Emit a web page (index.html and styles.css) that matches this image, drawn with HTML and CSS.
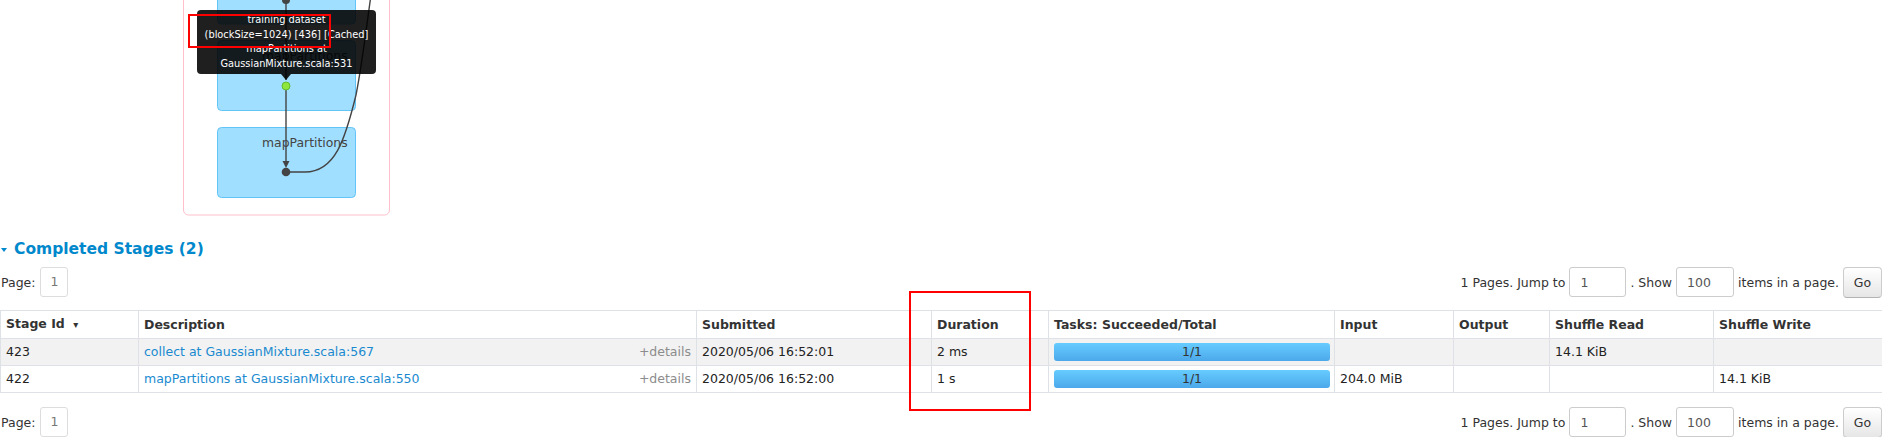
FILE: index.html
```html
<!DOCTYPE html>
<html lang="en">
<head>
  <meta charset="UTF-8">
  <meta name="viewport" content="width=device-width, initial-scale=1.0">
  <title>Stage Details</title>
  <link rel="stylesheet" href="styles.css">
</head>
<body>
<div class="page">
  <!-- DAG visualization -->
  <div class="dag">
    <svg class="dag-svg" width="420" height="216" viewBox="0 0 420 216">
      <rect x="183.5" y="-10" width="206" height="225" rx="5" fill="#fff" stroke="#ffc0cb"/>
      <rect class="dag-node" x="217.5" y="-60" width="138" height="84" rx="4"/>
      <rect class="dag-node" x="217.5" y="40.5" width="138" height="70" rx="4"/>
      <rect class="dag-node" x="217.5" y="127.5" width="138" height="70" rx="4"/>
      <text class="dag-label" x="262" y="60">mapPartitions</text>
      <text class="dag-label" x="262" y="147">mapPartitions</text>
      <path class="dag-edge" d="M286 0 V80"/>
      <path class="dag-edge" d="M286 90 V162"/>
      <polygon points="282.5,161 289.5,161 286,168" fill="#444"/>
      <path class="dag-edge" d="M290 172 H305 C335 172 345 140 356 95 C362 65 366 30 371 -5"/>
      <circle cx="286" cy="0" r="4" fill="#444"/>
      <circle cx="286" cy="86" r="4" fill="#8fe63e" stroke="#62bd2e"/>
      <circle cx="286" cy="172" r="4.3" fill="#444"/>
    </svg>
    <div class="dag-tooltip">training dataset<br>(blockSize=1024) [436] [Cached]<br>mapPartitions at<br>GaussianMixture.scala:531</div>
    <div class="mark mark-tooltip"></div>
  </div>

  <h4 class="section-title"><span class="caret"></span>Completed Stages (2)</h4>

  <div class="pager">
    <div class="pager-left">
      <span>Page:</span>
      <span class="page-box">1</span>
    </div>
    <div class="pager-right">
      <span>1 Pages. Jump to</span>
      <input class="pager-input jump" type="text" value="1">
      <span>. Show</span>
      <input class="pager-input size" type="text" value="100">
      <span>items in a page.</span>
      <button class="go-btn">Go</button>
    </div>
  </div>

  <table class="stages">
    <colgroup>
      <col style="width:138px">
      <col style="width:558px">
      <col style="width:235px">
      <col style="width:117px">
      <col style="width:286px">
      <col style="width:119px">
      <col style="width:96px">
      <col style="width:164px">
      <col style="width:169px">
    </colgroup>
    <thead>
      <tr>
        <th>Stage Id <span class="sort">&#x25BE;</span></th>
        <th>Description</th>
        <th>Submitted</th>
        <th>Duration</th>
        <th>Tasks: Succeeded/Total</th>
        <th>Input</th>
        <th>Output</th>
        <th>Shuffle Read</th>
        <th>Shuffle Write</th>
      </tr>
    </thead>
    <tbody>
      <tr class="odd">
        <td>423</td>
        <td><a href="#">collect at GaussianMixture.scala:567</a><span class="details">+details</span></td>
        <td>2020/05/06 16:52:01</td>
        <td>2 ms</td>
        <td class="progress-cell"><div class="progress">1/1</div></td>
        <td></td>
        <td></td>
        <td>14.1 KiB</td>
        <td></td>
      </tr>
      <tr>
        <td>422</td>
        <td><a href="#">mapPartitions at GaussianMixture.scala:550</a><span class="details">+details</span></td>
        <td>2020/05/06 16:52:00</td>
        <td>1 s</td>
        <td class="progress-cell"><div class="progress">1/1</div></td>
        <td>204.0 MiB</td>
        <td></td>
        <td></td>
        <td>14.1 KiB</td>
      </tr>
    </tbody>
  </table>

  <div class="pager pager-bottom">
    <div class="pager-left">
      <span>Page:</span>
      <span class="page-box">1</span>
    </div>
    <div class="pager-right">
      <span>1 Pages. Jump to</span>
      <input class="pager-input jump" type="text" value="1">
      <span>. Show</span>
      <input class="pager-input size" type="text" value="100">
      <span>items in a page.</span>
      <button class="go-btn">Go</button>
    </div>
  </div>

  <div class="mark mark-duration"></div>
</div>
</body>
</html>
```

FILE: styles.css
```css
body {
  margin: 0;
  font-family: "DejaVu Sans", Verdana, sans-serif;
  font-size: 12.5px;
  color: #333;
  background: #fff;
}
.page {
  position: relative;
}

/* DAG */
.dag {
  position: relative;
  height: 238px;
}
.dag-svg {
  display: block;
}
.dag-node {
  fill: #a0dfff;
  stroke: #62c4f7;
  stroke-width: 1;
}
.dag-label {
  font-family: "DejaVu Sans", sans-serif;
  font-size: 12.4px;
  fill: #444;
}
.dag-edge {
  fill: none;
  stroke: #444;
  stroke-width: 1.4;
}
.dag-tooltip {
  position: absolute;
  left: 197px;
  top: 10px;
  width: 179px;
  height: 64px;
  box-sizing: border-box;
  padding-top: 3px;
  background: rgba(0, 0, 0, 0.88);
  color: #fff;
  border-radius: 4px;
  font-size: 9.8px;
  line-height: 14.5px;
  text-align: center;
  white-space: nowrap;
}
.dag-tooltip::after {
  content: "";
  position: absolute;
  left: 84px;
  top: 64px;
  border-left: 5px solid transparent;
  border-right: 5px solid transparent;
  border-top: 6px solid rgba(0, 0, 0, 0.88);
}

/* red annotation boxes */
.mark {
  position: absolute;
  border: 2px solid #ff0000;
  box-sizing: border-box;
}
.mark-tooltip {
  left: 188px;
  top: 14px;
  width: 143px;
  height: 34px;
}
.mark-duration {
  left: 909px;
  top: 291px;
  width: 122px;
  height: 120px;
}

/* heading */
.section-title {
  display: flex;
  align-items: center;
  margin: 0;
  height: 22px;
  line-height: 22px;
  font-size: 15.5px;
  font-weight: bold;
  color: #0088cc;
}
.caret {
  width: 0;
  height: 0;
  border-left: 3.5px solid transparent;
  border-right: 3.5px solid transparent;
  border-top: 4px solid #0088cc;
  margin: 2px 7px 0 1px;
}

/* pagination */
.pager {
  display: flex;
  justify-content: space-between;
  align-items: center;
  height: 30px;
  margin-top: 7px;
}
.pager-bottom {
  margin-top: 14px;
}
.pager-left {
  display: flex;
  align-items: center;
  gap: 5px;
  padding-left: 1px;
}
.pager-right {
  display: flex;
  align-items: center;
  gap: 4px;
}
.page-box {
  width: 28px;
  height: 30px;
  box-sizing: border-box;
  border: 1px solid #ddd;
  border-radius: 3px;
  color: #777;
  line-height: 28px;
  text-align: center;
}
.pager-input {
  height: 30px;
  box-sizing: border-box;
  border: 1px solid #ccc;
  border-radius: 3px;
  padding: 0 10px;
  font-family: inherit;
  font-size: 12.5px;
  color: #555;
}
.pager-input.jump {
  width: 57px;
}
.pager-input.size {
  width: 58px;
}
.go-btn {
  width: 39px;
  height: 31px;
  border: 1px solid #ccc;
  border-bottom-color: #b3b3b3;
  border-radius: 4px;
  background: linear-gradient(#ffffff, #e6e6e6);
  font-family: inherit;
  font-size: 12.5px;
  color: #333;
  padding: 0;
}

/* table */
.stages {
  width: 100%;
  table-layout: fixed;
  border-collapse: collapse;
  margin-top: 13px;
}
.stages th, .stages td {
  padding: 6px 5px;
  line-height: 14px;
  text-align: left;
  border: 1px solid #dee2e6;
  white-space: nowrap;
  overflow: hidden;
}
.stages th {
  font-weight: bold;
  color: #333;
}
.stages td {
  color: #222;
}
.stages tr.odd td {
  background: #f2f2f2;
}
.sort {
  font-size: 10px;
  margin-left: 4px;
}
.stages a {
  color: #1a8ad0;
  text-decoration: none;
}
.details {
  float: right;
  color: #8c8c8c;
}
.stages td.progress-cell {
  padding: 4px 4px 4px 5px;
}
.progress {
  height: 18px;
  line-height: 18px;
  border-radius: 3px;
  background: linear-gradient(#66ccff, #4ca8ea);
  text-align: center;
  color: #333;
}
```
